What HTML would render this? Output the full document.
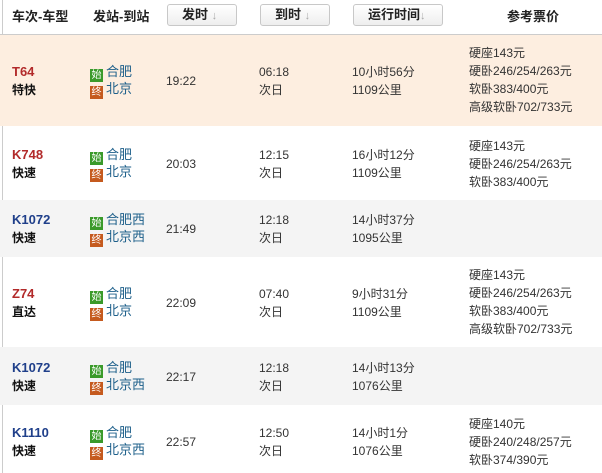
<!DOCTYPE html>
<html><head><meta charset="utf-8"><style>
*{margin:0;padding:0;box-sizing:border-box}
body{width:602px;height:473px;overflow:hidden;background:#fff;font-family:"Liberation Sans","Noto Sans CJK SC",sans-serif;font-size:12px;color:#333;position:relative}
.a{position:absolute;white-space:nowrap;line-height:18px}
.row{position:absolute;left:0;width:602px}
.hd{font-weight:bold;color:#222;font-size:13px}
.btn{position:absolute;top:4px;height:22px;border:1px solid #c8c8c8;border-radius:3px;background:linear-gradient(#fff,#eee);font-weight:bold;font-size:13px;line-height:20px;color:#222}
.btn i{color:#aaa;font-style:normal;font-size:11px}
.tn{font-weight:bold;font-size:13px}
.red{color:#b22a2a}.blue{color:#1f3f8a}
.ty{font-weight:bold;color:#111}
.ic{display:inline-block;width:13px;height:13px;font-size:10px;line-height:13px;text-align:center;color:#fff;vertical-align:-2px;margin-right:3px}
.s{background:#3a9a2a}.e{background:#c55a1e}
.st{color:#1d5f8a;font-size:13px}
</style></head><body>
<div style="position:absolute;left:2px;top:0;width:1px;height:473px;background:#ccc"></div>
<div class="row" style="top:34px;height:1px;background:#ccc"></div>
<div class="a hd" style="left:12px;top:8px">车次-车型</div>
<div class="a hd" style="left:93px;top:8px">发站-到站</div>
<div class="btn" style="left:167px;width:70px;padding-left:14px">发时 <i>↓</i></div>
<div class="btn" style="left:260px;width:70px;padding-left:14px">到时 <i>↓</i></div>
<div class="btn" style="left:353px;width:90px;padding-left:14px">运行时间<i>↓</i></div>
<div class="a hd" style="left:507px;top:8px">参考票价</div>

<div class="row" style="top:35px;height:91px;background:#fdeee0"></div>
<div class="row" style="top:200px;height:57px;background:#f4f4f4"></div>
<div class="row" style="top:347px;height:58px;background:#f4f4f4"></div>

<div class="a tn red" style="left:12px;top:63px">T64</div>
<div class="a ty" style="left:12px;top:81px">特快</div>
<div class="a" style="left:90px;top:63px"><span class="ic s">始</span><span class="st">合肥</span></div>
<div class="a" style="left:90px;top:80px"><span class="ic e">终</span><span class="st">北京</span></div>
<div class="a" style="left:166px;top:72px">19:22</div>
<div class="a" style="left:259px;top:63px">06:18<br>次日</div>
<div class="a" style="left:352px;top:63px">10小时56分<br>1109公里</div>
<div class="a" style="left:469px;top:44px">硬座143元<br>硬卧246/254/263元<br>软卧383/400元<br>高级软卧702/733元</div>

<div class="a tn red" style="left:12px;top:146px">K748</div>
<div class="a ty" style="left:12px;top:164px">快速</div>
<div class="a" style="left:90px;top:146px"><span class="ic s">始</span><span class="st">合肥</span></div>
<div class="a" style="left:90px;top:163px"><span class="ic e">终</span><span class="st">北京</span></div>
<div class="a" style="left:166px;top:155px">20:03</div>
<div class="a" style="left:259px;top:146px">12:15<br>次日</div>
<div class="a" style="left:352px;top:146px">16小时12分<br>1109公里</div>
<div class="a" style="left:469px;top:137px">硬座143元<br>硬卧246/254/263元<br>软卧383/400元</div>

<div class="a tn blue" style="left:12px;top:211px">K1072</div>
<div class="a ty" style="left:12px;top:229px">快速</div>
<div class="a" style="left:90px;top:211px"><span class="ic s">始</span><span class="st">合肥西</span></div>
<div class="a" style="left:90px;top:228px"><span class="ic e">终</span><span class="st">北京西</span></div>
<div class="a" style="left:166px;top:220px">21:49</div>
<div class="a" style="left:259px;top:211px">12:18<br>次日</div>
<div class="a" style="left:352px;top:211px">14小时37分<br>1095公里</div>

<div class="a tn red" style="left:12px;top:285px">Z74</div>
<div class="a ty" style="left:12px;top:303px">直达</div>
<div class="a" style="left:90px;top:285px"><span class="ic s">始</span><span class="st">合肥</span></div>
<div class="a" style="left:90px;top:302px"><span class="ic e">终</span><span class="st">北京</span></div>
<div class="a" style="left:166px;top:294px">22:09</div>
<div class="a" style="left:259px;top:285px">07:40<br>次日</div>
<div class="a" style="left:352px;top:285px">9小时31分<br>1109公里</div>
<div class="a" style="left:469px;top:266px">硬座143元<br>硬卧246/254/263元<br>软卧383/400元<br>高级软卧702/733元</div>

<div class="a tn blue" style="left:12px;top:359px">K1072</div>
<div class="a ty" style="left:12px;top:377px">快速</div>
<div class="a" style="left:90px;top:359px"><span class="ic s">始</span><span class="st">合肥</span></div>
<div class="a" style="left:90px;top:376px"><span class="ic e">终</span><span class="st">北京西</span></div>
<div class="a" style="left:166px;top:368px">22:17</div>
<div class="a" style="left:259px;top:359px">12:18<br>次日</div>
<div class="a" style="left:352px;top:359px">14小时13分<br>1076公里</div>

<div class="a tn blue" style="left:12px;top:424px">K1110</div>
<div class="a ty" style="left:12px;top:442px">快速</div>
<div class="a" style="left:90px;top:424px"><span class="ic s">始</span><span class="st">合肥</span></div>
<div class="a" style="left:90px;top:441px"><span class="ic e">终</span><span class="st">北京西</span></div>
<div class="a" style="left:166px;top:433px">22:57</div>
<div class="a" style="left:259px;top:424px">12:50<br>次日</div>
<div class="a" style="left:352px;top:424px">14小时1分<br>1076公里</div>
<div class="a" style="left:469px;top:415px">硬座140元<br>硬卧240/248/257元<br>软卧374/390元</div>
</body></html>
